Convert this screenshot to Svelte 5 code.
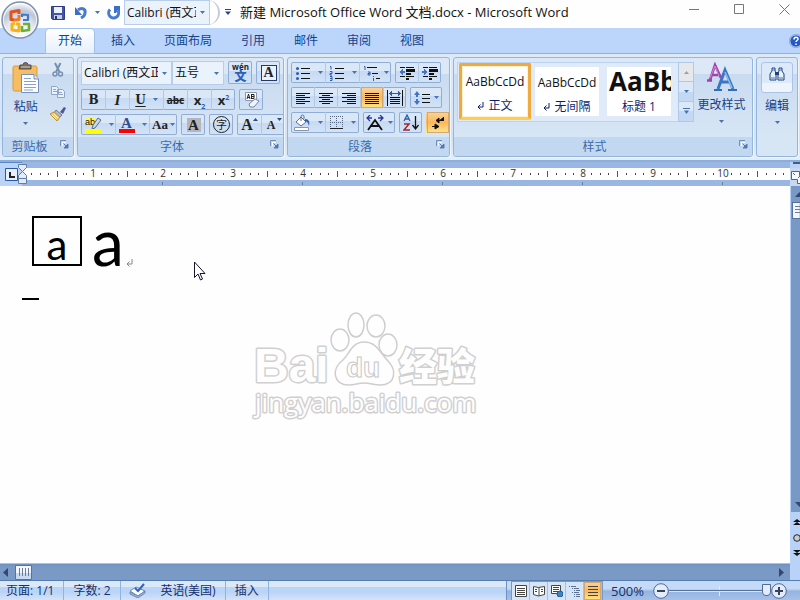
<script lang="ts">
  const UNIT = 70;

  const tabs = ['开始', '插入', '页面布局', '引用', '邮件', '审阅', '视图'];
  const styles = [
    { sample: 'AaBbCcDd', name: '正文', mark: true, heading: false },
    { sample: 'AaBbCcDd', name: '无间隔', mark: true, heading: false },
    { sample: 'AaBb', name: '标题 1', mark: false, heading: true },
  ];

  let activeTab = $state('开始');
  let activeStyle = $state('正文');
  let align = $state('两端对齐');
  let view = $state('普通视图');
  let zoom = $state(500);
  let scaleWidth = $state(0);

  const units = $derived(Array.from({ length: Math.ceil(scaleWidth / UNIT) }, (_, i) => i));
</script>

{#snippet caret()}
  <svg class="caret" width="5" height="3" viewBox="0 0 5 3"><path d="M0 0h5L2.5 3z" fill="#4874b2" /></svg>
{/snippet}

{#snippet lines(d: string)}
  <svg width="16" height="16" viewBox="0 0 16 16"><path {d} stroke="#111" fill="none" shape-rendering="crispEdges" /></svg>
{/snippet}

{#snippet groupLabel(text: string)}
  <footer class="group-label">
    <span>{text}</span>
    <button type="button" class="launcher" aria-label="{text}设置">
      <svg width="9" height="9" viewBox="0 0 9 9">
        <path d="M.5 6V.5H6" stroke="#6d90c0" fill="none" />
        <path d="M2.5 6V2.5H6" stroke="#fff" fill="none" />
        <path d="M3.5 3.5l3 3M8 4v4H4z" stroke="#577bb0" fill="#577bb0" />
      </svg>
    </button>
  </footer>
{/snippet}

{#snippet returnMark()}
  <svg width="7" height="8" viewBox="0 0 7 8"><path d="M6 0v5H1M3.5 2.5L1 5l2.5 2.5" stroke="currentColor" fill="none" /></svg>
{/snippet}

<div class="window">
  <header class="titlebar">
    <button type="button" class="office" aria-label="Office 按钮">
      <svg width="40" height="40" viewBox="0 0 40 40">
        <defs>
          <radialGradient id="orb" cx="50%" cy="85%" r="80%">
            <stop offset="0" stop-color="#fff" />
            <stop offset=".5" stop-color="#e3e7ef" />
            <stop offset=".75" stop-color="#bcc5d5" />
            <stop offset="1" stop-color="#f4f6fa" />
          </radialGradient>
        </defs>
        <circle cx="20" cy="20" r="18" fill="url(#orb)" stroke="#8191ab" stroke-width="1.5" />
        <circle cx="20" cy="20" r="16.5" fill="none" stroke="#fff" opacity=".8" />
        <g fill="none" stroke-width="3" stroke-linejoin="round">
          <path d="M19 14v-3.500l-8 1.500v7.500l3 .5" stroke="#e0531c" />
          <path d="M14 20l5-.5V15" stroke="#ee7a25" />
          <path d="M22 17v-2.500l6 .5v5h-5" stroke="#3f79cc" stroke-width="2.2" />
          <path d="M15 23.500l-3 .5v6l7 1v-7h-3" stroke="#f6b312" />
          <path d="M22 26v5l7-1v-6h-6" stroke="#6fae3a" stroke-width="2.6" />
        </g>
      </svg>
    </button>
    <div class="quick">
      <button type="button" aria-label="保存">
        <svg width="14" height="14" viewBox="0 0 14 14">
          <path d="M.5.5h13v13h-12l-1-1z" fill="#4256a8" stroke="#2e3c86" />
          <path d="M3 1h8v6H3z" fill="#eef2fb" />
          <path d="M3 9h8v4H3z" fill="#c6cfe6" />
          <path d="M4 10h2v3H4z" fill="#27346f" />
        </svg>
      </button>
      <button type="button" aria-label="撤消">
        <svg width="14" height="14" viewBox="0 0 14 14">
          <path d="M4 4c4-3 8-1 7 3 0 3-2 4-4 5" fill="none" stroke="#477bd0" stroke-width="3" />
          <path d="M1 1v8h7z" fill="#3b6ec6" />
        </svg>
      </button>
      <button type="button" class="drop" aria-label="撤消列表">{@render caret()}</button>
      <button type="button" aria-label="恢复">
        <svg width="14" height="14" viewBox="0 0 14 14">
          <path d="M3 3.5a5 5 0 1 0 8 1" fill="none" stroke="#477bd0" stroke-width="3" />
          <path d="M7 0h6v6l-2-2-2 3H7z" fill="#3b6ec6" />
        </svg>
      </button>
      <span class="combo quick-font">
        <select aria-label="字体"><option>Calibri (西文正文)</option></select>
        {@render caret()}
      </span>
    </div>
    <button type="button" class="customize" aria-label="自定义快速访问工具栏">
      <svg width="6" height="6" viewBox="0 0 6 6"><path d="M0 0h6v1H0zM0 2.5h6L3 6z" fill="#24478c" /></svg>
    </button>
    <h1 class="title">新建 Microsoft Office Word 文档.docx - Microsoft Word</h1>
    <div class="controls">
      <button type="button" aria-label="最小化"><svg width="11" height="11" viewBox="0 0 11 11"><path d="M0 5.5h10" /></svg></button>
      <button type="button" aria-label="最大化"><svg width="11" height="11" viewBox="0 0 11 11"><path d="M.5.5h9v9h-9z" /></svg></button>
      <button type="button" aria-label="关闭"><svg width="11" height="11" viewBox="0 0 11 11"><path d="M.5.5l10 10M10.5.5l-10 10" /></svg></button>
    </div>
  </header>

  <nav class="tabs">
    {#each tabs as tab}
      <button type="button" class="tab" class:active={activeTab === tab} onclick={() => (activeTab = tab)}>{tab}</button>
    {/each}
    <button type="button" class="help" aria-label="帮助">
      <svg width="14" height="14" viewBox="0 0 14 14">
        <circle cx="7" cy="7" r="6.3" fill="#2459c6" stroke="#fff" />
        <circle cx="7" cy="7" r="6.7" fill="none" stroke="#5d7fb8" stroke-width=".6" />
        <path d="M5 5.5c0-3 4-3 4-.5 0 1.5-2 1.5-2 3M7 9.5v1.5" stroke="#fff" stroke-width="1.5" fill="none" />
      </svg>
    </button>
  </nav>

  <section class="ribbon">
    <div class="group clipboard">
      <div class="body">
        <button type="button" class="big paste">
          <svg width="28" height="32" viewBox="0 0 28 32">
            <rect x="1" y="4" width="24" height="25" rx="1.5" fill="#f6bd62" stroke="#d89b3e" />
            <path d="M8 3h3a2.500 2.500 0 0 1 5 0h3v4H7z" fill="#7c6f63" stroke="#594e46" />
            <path d="M9 5h9" stroke="#d5cec6" />
            <path d="M9.5 12.5H22l4.500 4.500v13.500h-17z" fill="#fff" stroke="#7590bc" />
            <path d="M22 12.5V17h4.500" fill="#dae6f7" stroke="#7590bc" />
            <path d="M12 16.5h7M12 19.5h12M12 22.5h12M12 25.5h12M12 28h9" stroke="#86a2cd" />
          </svg>
          <span>粘贴</span>
          {@render caret()}
        </button>
        <div class="stack">
          <button type="button" aria-label="剪切">
            <svg width="14" height="16" viewBox="0 0 14 16" fill="none" stroke="#7890b0">
              <path d="M4 1l4.500 9M9.5 1L5 10" stroke-width="2" />
              <circle cx="4" cy="12" r="2" stroke-width="1.5" /><circle cx="9.5" cy="12" r="2" stroke-width="1.5" />
            </svg>
          </button>
          <button type="button" aria-label="复制">
            <svg width="16" height="14" viewBox="0 0 16 14" stroke="#8ba5cb" fill="#edf3fb">
              <path d="M1.5 1.5h5l2 2v6h-7zM7.5 4.5h5l2 2v6h-7z" />
              <path d="M3 4.5h3M3 6.5h4M9 7.5h3M9 9.5h4" />
            </svg>
          </button>
          <button type="button" aria-label="格式刷">
            <svg width="18" height="16" viewBox="0 0 18 16">
              <path d="M11 6l4-5 2 1-3 6z" fill="#53559b" />
              <path d="M7 4l6 5-2 2-6-4z" fill="#b5bac9" stroke="#71788d" />
              <path d="M1 8l4-2 6 5-3 4z" fill="#f4cf65" stroke="#bd913b" />
              <path d="M3 9l4 4M5 8l4 4" stroke="#fff3b5" />
            </svg>
          </button>
        </div>
      </div>
      {@render groupLabel('剪贴板')}
    </div>

    <div class="group font">
      <div class="body rows">
        <div class="row">
          <div class="pair">
            <span class="combo name">
              <select aria-label="字体名称"><option>Calibri (西文正文)</option></select>
              {@render caret()}
            </span>
            <span class="combo size">
              <select aria-label="字号"><option>五号</option><option>四号</option></select>
              {@render caret()}
            </span>
          </div>
          <div class="cells">
            <button type="button" aria-label="拼音指南" class="pinyin"><span>wén</span><b>文</b></button>
          </div>
          <div class="cells">
            <button type="button" aria-label="字符边框"><span class="boxed">A</span></button>
          </div>
        </div>
        <div class="row">
          <div class="cells">
            <button type="button" aria-label="加粗"><b class="serif">B</b></button>
            <button type="button" aria-label="倾斜"><i class="serif">I</i></button>
            <button type="button" class="wide" aria-label="下划线"><b class="serif under">U</b>{@render caret()}</button>
            <button type="button" aria-label="删除线"><s>abc</s></button>
            <button type="button" aria-label="下标"><span class="script">x<sub>2</sub></span></button>
            <button type="button" aria-label="上标"><span class="script">x<sup>2</sup></span></button>
          </div>
          <div class="cells">
            <button type="button" aria-label="清除格式">
              <svg width="16" height="16" viewBox="0 0 16 16">
                <path d="M1.5.5h11v8h-11z" fill="#fff" stroke="#8998b2" />
                <path d="M3 7l1.500-5L6 7M3.5 5.5h2M7.5 2v5M7.5 2.5H10v4H7.5M7.5 4.5H10" stroke="#222" fill="none" />
                <path d="M5 12l6-5 4 2-5 6H6z" fill="#f2f5fb" stroke="#7386a8" />
              </svg>
            </button>
          </div>
        </div>
        <div class="row">
          <div class="cells">
            <button type="button" class="wide" aria-label="突出显示">
              <svg width="18" height="16" viewBox="0 0 18 16">
                <path d="M1 0h10v8H1z" fill="#fff45a" />
                <text x="1" y="8" font-family="Liberation Sans" font-size="9" fill="#111">ab</text>
                <path d="M14 1l3 2-6 8-3 1 1-4z" fill="#cbd7ec" stroke="#556b92" />
                <path d="M1 12h16v4H1z" fill="#ffff00" />
              </svg>
              {@render caret()}
            </button>
            <button type="button" class="wide" aria-label="字体颜色"><span class="colored">A</span>{@render caret()}</button>
            <button type="button" class="mid" aria-label="更改大小写"><b class="case">Aa</b>{@render caret()}</button>
          </div>
          <div class="cells">
            <button type="button" aria-label="字符底纹"><b class="shaded">A</b></button>
          </div>
          <div class="cells">
            <button type="button" aria-label="带圈字符"><span class="circled">字</span></button>
          </div>
          <div class="cells">
            <button type="button" aria-label="增大字体">
              <b class="grow">A</b><svg class="tip" width="5" height="3" viewBox="0 0 5 3"><path d="M0 3h5L2.5 0z" fill="#274d91" /></svg>
            </button>
            <button type="button" aria-label="缩小字体">
              <b class="shrink">A</b><svg class="tip" width="5" height="3" viewBox="0 0 5 3"><path d="M0 0h5L2.5 3z" fill="#274d91" /></svg>
            </button>
          </div>
        </div>
      </div>
      {@render groupLabel('字体')}
    </div>

    <div class="group paragraph">
      <div class="body rows">
        <div class="row">
          <div class="cells">
            <button type="button" class="wide" aria-label="项目符号">
              <svg width="16" height="16" viewBox="0 0 16 16">
                <path d="M6 3.5h9M6 8.5h9M6 13.5h9" stroke="#111" shape-rendering="crispEdges" />
                <g fill="#315bad"><circle cx="2.5" cy="3.5" r="1.5" /><circle cx="2.5" cy="8.5" r="1.5" /><circle cx="2.5" cy="13.5" r="1.5" /></g>
              </svg>
              {@render caret()}
            </button>
            <button type="button" class="wide" aria-label="编号">
              <svg width="16" height="16" viewBox="0 0 16 16">
                <path d="M6 3.5h9M6 8.5h9M6 13.5h9" stroke="#111" shape-rendering="crispEdges" />
                <path d="M1 1.5h1v3M1 6.5h2v2H1v1.500h2M1 11.5h2v4H1M1 13.5h2" stroke="#315bad" fill="none" />
              </svg>
              {@render caret()}
            </button>
            <button type="button" class="mid" aria-label="多级列表">
              <svg width="17" height="16" viewBox="0 0 17 16">
                <path d="M4 2.5h10M9 8.5h6M13 13.5h4" stroke="#111" shape-rendering="crispEdges" />
                <path d="M1 1.5h1V5M5 7h2v3H5V8.5h2M10.5 11v1M10.5 13v3" stroke="#315bad" fill="none" />
              </svg>
              {@render caret()}
            </button>
          </div>
          <div class="cells">
            <button type="button" aria-label="减少缩进量">
              <svg width="16" height="16" viewBox="0 0 16 16" shape-rendering="crispEdges">
                <path d="M1 2h5v1H1zM7 2h8v1H7zM7 4h9v3H7zM7 8h5v2H7zM1 11h5v1H1zM7 11h8v1H7zM7 13h3v2H7z" fill="#111" />
                <path d="M0 7l4-3v2h2v2H4v2z" fill="#4473c4" />
              </svg>
            </button>
            <button type="button" aria-label="增加缩进量">
              <svg width="16" height="16" viewBox="0 0 16 16" shape-rendering="crispEdges">
                <path d="M1 2h5v1H1zM7 2h8v1H7zM7 4h9v3H7zM7 8h5v2H7zM1 11h5v1H1zM7 11h8v1H7zM7 13h3v2H7z" fill="#111" />
                <path d="M6 7L2 4v2H0v2h2v2z" fill="#4473c4" />
              </svg>
            </button>
          </div>
        </div>
        <div class="row">
          <div class="cells">
            {#each [
              ['左对齐', 'M1 3.5h14M1 5.5h9M1 7.5h14M1 9.5h9M1 11.5h14M1 13.5h9'],
              ['居中', 'M1 3.5h14M4 5.5h8M1 7.5h14M4 9.5h8M1 11.5h14M4 13.5h8'],
              ['右对齐', 'M1 3.5h14M6 5.5h9M1 7.5h14M6 9.5h9M1 11.5h14M6 13.5h9'],
              ['两端对齐', 'M1 3.5h14M1 5.5h14M1 7.5h14M1 9.5h14M1 11.5h14M1 13.5h14'],
            ] as [name, d]}
              <button type="button" class:on={align === name} aria-label={name} onclick={() => (align = name)}>
                {@render lines(d)}
              </button>
            {/each}
            <button type="button" aria-label="分散对齐">
              <svg width="16" height="16" viewBox="0 0 16 16" shape-rendering="crispEdges">
                <path d="M.5 0v16M15.5 0v16M3 7.5h10M3 9.5h10M3 11.5h10M3 13.5h10" stroke="#111" />
                <path d="M2 3.5h12M4.5 1v5M11.5 1v5M3.5 2v3M12.5 2v3" stroke="#315bad" />
              </svg>
            </button>
          </div>
          <div class="cells">
            <button type="button" class="mid" aria-label="行距">
              <svg width="16" height="16" viewBox="0 0 16 16">
                <path d="M8 4.5h8M8 8.5h8M8 12.5h8" stroke="#111" shape-rendering="crispEdges" />
                <path d="M0 5l3-4 3 4H4v2H2V5zM0 11l3 4 3-4H4V9H2v2z" fill="#4473c4" />
              </svg>
              {@render caret()}
            </button>
          </div>
        </div>
        <div class="row">
          <div class="cells">
            <button type="button" class="wide" aria-label="底纹">
              <svg width="17" height="17" viewBox="0 0 17 17">
                <path d="M2 8l5-5 5 5-5 4z" fill="#fff" stroke="#5a7296" />
                <path d="M7 7V2.5a1.500 1.500 0 0 1 3 0V5" fill="none" stroke="#5a7296" />
                <path d="M11 5c4 0 5 3 4 7-1-3-1-4-4-5z" fill="#315bad" />
                <path d="M.5 13.5h14v3H.5z" fill="#fff" stroke="#8a97aa" />
              </svg>
              {@render caret()}
            </button>
            <button type="button" class="wide" aria-label="边框">
              <svg width="15" height="15" viewBox="0 0 15 15" shape-rendering="crispEdges">
                <path d="M1 1.5h13M1 7.5h13M1.5 1v12M7.5 1v12M13.5 1v12" stroke="#52647f" stroke-dasharray="1 1" fill="none" />
                <path d="M1 13.5h13" stroke="#222" />
              </svg>
              {@render caret()}
            </button>
          </div>
          <div class="cells">
            <button type="button" class="mid" aria-label="中文版式">
              <svg width="18" height="16" viewBox="0 0 18 16">
                <path d="M2 15L9 5l7 10M5 11h8" stroke="#111" stroke-width="1.8" fill="none" />
                <path d="M1 3h5M12 3h5M4 0L1 3l3 3M14 0l3 3-3 3" stroke="#263a9a" stroke-width="1.3" fill="none" />
              </svg>
              {@render caret()}
            </button>
          </div>
          <div class="cells">
            <button type="button" class="sort" aria-label="排序">
              <svg width="16" height="17" viewBox="0 0 16 17" fill="none">
                <path d="M1 7l3-6 3 6M2 5h4" stroke="#315bad" stroke-width="1.3" />
                <path d="M1 10h5l-5 6h6" stroke="#a5242c" stroke-width="1.5" />
                <path d="M12.5 2v12M9.5 11l3 4 3-4" stroke="#111" stroke-width="1.3" />
              </svg>
            </button>
          </div>
          <div class="cells">
            <button type="button" class="on" aria-label="显示编辑标记">
              <svg width="14" height="14" viewBox="0 0 14 14">
                <path d="M12.5 1v3.500H8M8 2v5L5 4.500zM1 10.5h4M4 8v5l4-2.500z" stroke="#111" fill="#111" />
                <path d="M12.5 1v3.500H8" stroke="#111" fill="none" />
              </svg>
            </button>
          </div>
        </div>
      </div>
      {@render groupLabel('段落')}
    </div>

    <div class="group styles">
      <div class="body">
        <div class="gallery">
          {#each styles as s}
            <button type="button" class="style" class:chosen={activeStyle === s.name} onclick={() => (activeStyle = s.name)}>
              <span class="sample" class:heading={s.heading}>{s.sample}</span>
              <span class="style-name">{#if s.mark}{@render returnMark()}{/if}{s.name}</span>
            </button>
          {/each}
          <div class="gallery-scroll">
            <button type="button" class="off" aria-label="上一行"><svg width="5" height="3" viewBox="0 0 5 3"><path d="M0 3h5L2.5 0z" fill="#9a9fa8" /></svg></button>
            <button type="button" aria-label="下一行">{@render caret()}</button>
            <button type="button" aria-label="其他"><svg width="7" height="6" viewBox="0 0 7 6"><path d="M0 0h7v1H0zM1 2.5h5L3.5 6z" fill="#4874b2" /></svg></button>
          </div>
        </div>
        <button type="button" class="big change">
          <svg width="30" height="30" viewBox="0 0 30 30">
            <path d="M3 18L8 3l6 13M4 13h8M0 18.5h5" stroke="#9c45ac" stroke-width="2.6" fill="none" />
            <path d="M3 16L8 4l4 10" stroke="#dc86d4" fill="none" />
            <path d="M11 27l7-19 8 19M13 20h10" stroke="#3b76c2" stroke-width="3" fill="none" />
            <path d="M7 28h8M21 28h9" stroke="#326eb9" stroke-width="2" />
            <path d="M18 10l7 16" stroke="#8cbcec" stroke-width="1.5" />
          </svg>
          <span>更改样式</span>
          {@render caret()}
        </button>
      </div>
      {@render groupLabel('样式')}
    </div>

    <div class="group editing">
      <button type="button" class="big edit">
        <span class="edit-icon">
          <svg width="16" height="14" viewBox="0 0 16 14">
            <path d="M3 1h3v3l1 2v7H1V7l2-3zM10 1h3v3l2 3v6H9V6l1-2z" fill="#e9f0fa" stroke="#1e4178" />
            <path d="M6 5h4v3H6z" fill="#1e4178" />
            <path d="M2 11h4M10 11h4M3 3h3M10 3h3" stroke="#4671b1" />
          </svg>
        </span>
        <span>编辑</span>
        {@render caret()}
      </button>
    </div>
  </section>

  <div class="workspace">
    <div class="sheet">
      <div class="ruler">
        <button type="button" class="tabstop" aria-label="左对齐式制表符">
          <svg width="17" height="17" viewBox="0 0 17 17">
            <path d="M2.5 2.5h12v12h-12z" fill="#e7effb" stroke="#2c56a8" />
            <path d="M7 6v5h5" stroke="#222" stroke-width="2" fill="none" />
          </svg>
        </button>
        <div class="scale" bind:clientWidth={scaleWidth}>
          <svg class="indent" width="9" height="21" viewBox="0 0 9 21">
            <path d="M.5.5h8v3l-4 4-4-4zM.5 14.5v-3l4-4 4 4v3zM.5 14.5h8v5h-8z" fill="#e3ecf8" stroke="#5f7ba8" />
          </svg>
          <svg class="marks" width={scaleWidth} height="24">
            {#each units as u}
              {#each [1, 2, 3, 5, 6, 7] as n}
                <path d="M{Math.round(u * UNIT + (n * UNIT) / 8)}.5 11v2" stroke="#444" />
              {/each}
              <path d="M{u * UNIT + 35}.5 9v6" stroke="#555" />
              {#if u > 0}
                <text x={u * UNIT + 1} y="15" text-anchor="middle">{u}</text>
              {/if}
              {#if u > 0 && u % 2 === 0}
                <path d="M{u * UNIT}.5 20v3" stroke="#6b7f9f" />
              {/if}
            {/each}
          </svg>
        </div>
      </div>

      <main class="page">
        <p class="line"><span class="enclosed">a</span><span class="letter">a</span><span class="pilcrow">{@render returnMark()}</span></p>
        <div class="end-mark"></div>
        <svg class="watermark" width="240" height="116" viewBox="0 0 240 116">
          <g fill="#fefefe" stroke="#d0d0d0" stroke-width="3" paint-order="stroke" stroke-linejoin="round">
            <text x="4" y="74" font-size="48" font-weight="700" font-family="Liberation Sans">Bai</text>
            <text x="149" y="72" font-size="38" font-weight="900" font-family="Noto Sans CJK SC">经验</text>
            <text x="5" y="104" font-size="26" font-family="Open Sans">jingyan.baidu.com</text>
          </g>
          <g fill="#fefefe" stroke="#cecece" stroke-width="1.5">
            <ellipse cx="90" cy="32" rx="9" ry="11" />
            <ellipse cx="106" cy="17" rx="8" ry="12" />
            <ellipse cx="126" cy="18" rx="9" ry="11" />
            <ellipse cx="138" cy="37" rx="9" ry="11" />
            <path d="M114 34c-12 0-14 11-21 18-12 9-10 25 6 25 6 0 9-2 15-2s10 2 16 2c16 0 17-15 8-24-8-8-11-19-24-19z" />
          </g>
          <text x="96" y="69" font-size="28" font-weight="700" font-family="Liberation Sans" fill="#fefefe" stroke="#c8c8c8">du</text>
        </svg>
        <svg class="pointer" width="13" height="21" viewBox="0 0 13 21">
          <path d="M1.5 1v15.500l3.500-3.500 2.500 6 2-1-2.500-5.500h5z" fill="#fff" stroke="#15152f" />
        </svg>
      </main>

      <div class="hscroll">
        <button type="button" aria-label="向左滚动"><svg width="5" height="9" viewBox="0 0 5 9"><path d="M5 0v9L0 4.500z" fill="#34496c" /></svg></button>
        <button type="button" class="hthumb" aria-label="水平滑块"><svg width="10" height="8" viewBox="0 0 10 8"><path d="M.5 0v8M3.5 0v8M6.5 0v8M9.5 0v8" stroke="#6a7d9e" /></svg></button>
        <span class="space"></span>
        <button type="button" aria-label="向右滚动"><svg width="5" height="9" viewBox="0 0 5 9"><path d="M0 0v9l5-4.500z" fill="#34496c" /></svg></button>
      </div>
    </div>

    <div class="vscroll">
      <button type="button" class="split" aria-label="拆分窗口"></button>
      <button type="button" class="ruler-toggle" aria-label="标尺">
        <svg width="14" height="14" viewBox="0 0 14 14"><path d="M1.5 1.5h8v4h4v8h-6v-4h-6zM3 3l2 2M8 8l3-3" fill="#f5f8fd" stroke="#5b6473" /></svg>
      </button>
      <div class="track">
        <button type="button" class="arrow" aria-label="向上滚动"><svg width="9" height="5" viewBox="0 0 9 5"><path d="M0 5h9L4.5 0z" fill="#34496c" /></svg></button>
        <button type="button" class="vthumb" aria-label="垂直滑块"><svg width="8" height="9" viewBox="0 0 8 9"><path d="M0 .5h8M0 3.5h8M0 6.5h8" stroke="#6a7d9e" /></svg></button>
        <span class="space"></span>
        <button type="button" class="arrow" aria-label="向下滚动"><svg width="9" height="5" viewBox="0 0 9 5"><path d="M0 0h9L4.5 5z" fill="#34496c" /></svg></button>
      </div>
      <div class="browse">
        <button type="button" aria-label="前一页"><svg width="8" height="7" viewBox="0 0 8 7"><path d="M0 3h8L4 0zM0 6h8L4 3z" fill="#111" /></svg></button>
        <button type="button" aria-label="选择浏览对象"><svg width="8" height="8" viewBox="0 0 8 8"><circle cx="4" cy="4" r="3.3" fill="#c9ccd2" stroke="#222" /></svg></button>
        <button type="button" aria-label="下一页"><svg width="8" height="7" viewBox="0 0 8 7"><path d="M0 1h8L4 4zM0 4h8L4 7z" fill="#111" /></svg></button>
      </div>
    </div>
  </div>

  <footer class="status">
    <button type="button">页面: 1/1</button>
    <button type="button">字数: 2</button>
    <button type="button" class="lang">
      <svg width="17" height="15" viewBox="0 0 17 15">
        <path d="M1 8l6-4 9 4-7 5z" fill="#fff" stroke="#6c87b4" />
        <path d="M1 9v2l8 4 7-5V8l-7 5z" fill="#9eb8e0" stroke="#6c87b4" />
        <path d="M6 5l3 3 6-7" stroke="#2f62c0" stroke-width="2" fill="none" />
      </svg>
      英语(美国)
    </button>
    <button type="button">插入</button>
    <span class="space"></span>
    <div class="tray">
      <div class="views">
        {#each ['页面视图', '阅读版式', 'Web 版式', '大纲视图', '普通视图'] as name, i}
          <button type="button" class:on={view === name} aria-label={name} onclick={() => (view = name)}>
            <svg width="12" height="12" viewBox="0 0 12 12" fill="none" stroke="#444">
              {#if i === 0}
                <path d="M.5.5h11v11H.5z" fill="#fff" /><path d="M2 3.5h8M2 5.5h8M2 7.5h8M2 9.5h8" />
              {:else if i === 1}
                <path d="M.5 1.5l5 1 6-1v8l-6 1.500-5-1.500z" fill="#fff" /><path d="M6 2v9M2 4.5h2M2 6.5h2M8 4.5h2M8 6.5h2" />
              {:else if i === 2}
                <path d="M.5.5h9v8h-9z" fill="#fff" /><path d="M2 2.5h6M2 4.5h6M2 6.5h5" /><circle cx="9" cy="9" r="3" fill="#3b86c6" stroke="#1f5e93" />
              {:else if i === 3}
                <path d="M0 1.5h1M2 1.5h5M3 3.5h1M5 3.5h5M5 5.5h1M7 5.5h4M3 7.5h1M5 7.5h5M5 9.5h1M7 9.5h4M5 11.5h1M7 11.5h4" stroke="#5d7190" />
              {:else}
                <path d="M1 1.5h10M1 4.5h10M1 7.5h10M1 10.5h10" />
              {/if}
            </svg>
          </button>
        {/each}
      </div>
      <button type="button" class="percent">{zoom}%</button>
      <button type="button" class="round" aria-label="缩小" onclick={() => (zoom = Math.max(10, zoom - 10))}>
        <svg width="16" height="16" viewBox="0 0 16 16"><circle cx="8" cy="8" r="7.3" fill="#e3ecf8" stroke="#506a96" /><path d="M4 8h8" stroke="#35435c" stroke-width="2" /></svg>
      </button>
      <input type="range" min="10" max="500" bind:value={zoom} aria-label="显示比例" />
      <button type="button" class="round" aria-label="放大" onclick={() => (zoom = Math.min(500, zoom + 10))}>
        <svg width="16" height="16" viewBox="0 0 16 16"><circle cx="8" cy="8" r="7.3" fill="#e3ecf8" stroke="#506a96" /><path d="M4 8h8M8 4v8" stroke="#35435c" stroke-width="2" /></svg>
      </button>
    </div>
  </footer>
</div>

<style>
  :global(body) {
    margin: 0;
  }
  .window {
    display: flex;
    flex-direction: column;
    height: 100vh;
    overflow: hidden;
    position: relative;
    background: #fefefe;
    color: #111;
    font-family: 'Open Sans', 'Noto Sans CJK SC', sans-serif;
    font-size: 12px;
    line-height: 16px;
  }
  button,
  select {
    font: inherit;
    color: inherit;
    border: 0;
    padding: 0;
    background: none;
  }
  svg {
    display: block;
    flex: none;
  }
  .space {
    flex: 1;
  }

  .titlebar {
    display: flex;
    height: 28px;
    background: #fefefe;
  }
  .office {
    position: absolute;
    left: 0;
    top: 0;
    z-index: 2;
  }
  .quick {
    display: flex;
    align-items: center;
    gap: 9px;
    height: 25px;
    box-sizing: border-box;
    width: 182px;
    margin-left: 38px;
    padding-left: 13px;
    border: solid #c5cad4;
    border-width: 0 2px 0 0;
    border-radius: 0 16px 16px 0;
    background: #fefefe;
  }
  .quick .drop {
    margin: 0 -2px;
  }
  .combo {
    display: flex;
    align-items: center;
    position: relative;
    background: #eaf2fc;
    outline: 1px solid #b7cdea;
    outline-offset: -1px;
  }
  .combo select {
    appearance: none;
    width: 100%;
    height: 100%;
    padding: 0 14px 0 3px;
  }
  .combo .caret {
    position: absolute;
    right: 5px;
  }
  .quick-font {
    height: 25px;
    flex: 1;
    margin: 0 8px 0 -6px;
  }
  .customize {
    padding: 0 5px;
    margin: 0 0 4px;
  }
  .title {
    flex: 1;
    margin: 0 0 0 4px;
    font-size: 13px;
    font-weight: 400;
    line-height: 24px;
    white-space: nowrap;
  }
  .controls {
    display: flex;
    height: 19px;
    margin-right: -7px;
  }
  .controls button {
    width: 45px;
    display: grid;
    place-items: center;
  }
  .controls path {
    stroke: #777;
    fill: none;
  }

  .tabs {
    display: flex;
    gap: 5px;
    height: 26px;
    box-sizing: border-box;
    padding: 1px 0 0 46px;
    background: #bbd5fb;
    border-bottom: 1px solid #8db2e3;
    color: #15428b;
  }
  .tab {
    padding: 0 12px;
    line-height: 24px;
  }
  .tab.active {
    background: linear-gradient(#fff, #e6f0fb);
    border-radius: 4px 4px 0 0;
    box-shadow: 0 0 0 1px #a1c1ec;
  }
  .help {
    margin: 0 -3px 0 auto;
  }

  .ribbon {
    display: flex;
    gap: 3px;
    padding: 3px 2px;
    background: linear-gradient(#dce9f8, #d3e3f6 80%, #e4eefa);
    border-bottom: 2px solid #8baedb;
    color: #15428b;
  }
  .group {
    display: flex;
    flex-direction: column;
    height: 100px;
    box-sizing: border-box;
    border: 1px solid #94b5df;
    border-radius: 3px;
    background: linear-gradient(#dce8f6 0, #dce8f6 16px, #c9dbf0 16px, #d7e6f5 78px);
    box-shadow: 1px 1px 0 #eef5fd;
    overflow: hidden;
  }
  .clipboard {
    width: 72px;
  }
  .font {
    width: 207px;
    --cell: 24px;
    --mid: 28px;
  }
  .paragraph {
    width: 163px;
    --cell: 23px;
    --mid: 32px;
  }
  .styles {
    flex: 1;
    min-width: 0;
  }
  .editing {
    width: 42px;
  }
  .body {
    flex: 1;
    display: flex;
    padding: 4px 3px 0;
  }
  .rows {
    flex-direction: column;
    gap: 4px;
  }
  .font .rows {
    padding-top: 3px;
  }
  .row {
    display: flex;
    gap: 4px;
  }
  .group-label {
    display: flex;
    align-items: center;
    height: 19px;
    background: #c2d8f1;
    color: #3e6aaa;
  }
  .group-label span {
    flex: 1;
    text-align: center;
  }
  .launcher {
    padding: 0 4px 4px;
  }
  .pair {
    display: flex;
    width: 144px;
    height: 24px;
  }
  .combo.name {
    width: 91px;
    color: #111;
  }
  .combo.size {
    flex: 1;
    color: #111;
  }
  .cells {
    display: flex;
    height: 21px;
    border-radius: 2px;
    background: linear-gradient(#dae7f7 45%, #c7daf2 45%, #d3e4f8);
    box-shadow: inset 0 0 0 1px #8fadd6;
  }
  .cells button {
    display: flex;
    align-items: center;
    justify-content: center;
    gap: 4px;
    box-sizing: border-box;
    width: var(--cell);
    border: solid #b2c9e6;
    border-width: 0 0 0 1px;
    color: #222;
    position: relative;
  }
  .cells button:first-child {
    border-left-color: transparent;
  }
  .cells .wide {
    width: 34px;
    gap: 7px;
  }
  .cells .mid {
    width: var(--mid);
  }
  .cells .on,
  .views .on {
    background: linear-gradient(#f9d3a0, #fcb858 50%, #ffe68e);
    box-shadow: inset 0 0 0 1px #d0a970;
  }
  .font .row:first-child .cells {
    height: 23px;
  }
  .serif {
    font-family: 'DejaVu Serif', 'Liberation Serif', serif;
    font-size: 12px;
  }
  i.serif {
    font-family: 'Liberation Serif', serif;
    font-size: 15px;
    font-weight: 700;
  }
  .under {
    text-decoration: underline;
    text-underline-offset: 2px;
  }
  .cells s {
    font-size: 10px;
    font-weight: 700;
  }
  .script {
    font-weight: 700;
    font-size: 13px;
  }
  .script sub,
  .script sup {
    font-size: 7px;
    line-height: 0;
    color: #315bad;
  }
  .cells .pinyin {
    flex-direction: column;
    gap: 0;
    font-weight: 700;
  }
  .pinyin span {
    font-size: 8px;
    line-height: 9px;
  }
  .pinyin b {
    font-size: 12px;
    line-height: 12px;
    color: #2c5fc0;
  }
  .boxed {
    width: 14px;
    border: 1px solid #223a66;
    font: 700 14px/14px 'Liberation Serif', serif;
    text-align: center;
    background: #eaf1fa;
  }
  .colored {
    width: 16px;
    border-bottom: 4px solid #f00;
    font: 700 15px/12px 'Liberation Serif', serif;
    text-align: center;
    color: #2d4f8e;
  }
  .cells .mid:has(.case) {
    gap: 2px;
  }
  .case {
    font: 700 13px/16px 'Liberation Serif', serif;
  }
  .shaded {
    width: 14px;
    background: #b5b5bb;
    font: 700 15px/14px 'Liberation Serif', serif;
    text-align: center;
  }
  .circled {
    width: 15px;
    border: 1px solid #222;
    border-radius: 50%;
    font-size: 11px;
    line-height: 15px;
    text-align: center;
  }
  .grow {
    font: 700 16px/16px 'Liberation Serif', serif;
    margin-right: 5px;
  }
  .shrink {
    font: 700 12px/16px 'Liberation Serif', serif;
    margin-right: 5px;
  }
  .tip {
    position: absolute;
    top: 4px;
    right: 3px;
  }

  .big {
    display: flex;
    flex-direction: column;
    align-items: center;
    color: #15428b;
  }
  .paste {
    width: 42px;
    gap: 5px;
  }
  .paste span {
    margin-bottom: 2px;
  }
  .stack {
    display: flex;
    flex-direction: column;
    align-items: center;
    gap: 7px;
    width: 26px;
  }

  .gallery {
    display: flex;
    flex: 1;
    gap: 4px;
    height: 60px;
    box-sizing: border-box;
    padding: 0 1px;
    border: 1px solid #bcd3f0;
    background: #dfebf8;
  }
  .style {
    display: flex;
    flex-direction: column;
    box-sizing: border-box;
    width: 72px;
    height: 57px;
    border: 4px solid transparent;
    background: #fff padding-box;
    overflow: hidden;
    color: #0d1f6e;
  }
  .style + .style {
    margin-left: -4px;
  }
  .style.chosen {
    border: 3px solid #f0a93c;
    border-bottom-color: #fbd050;
    border-radius: 2px;
    box-shadow: inset 0 0 0 1px #fdf1cf;
  }
  .sample {
    height: 32px;
    line-height: 32px;
    width: 100%;
    color: #111;
    text-align: center;
  }
  .sample.heading {
    font-size: 26px;
    line-height: 28px;
    font-weight: 700;
    text-align: left;
    padding-left: 2px;
  }
  .style-name {
    display: flex;
    align-items: center;
    justify-content: center;
    gap: 4px;
    width: 100%;
  }
  .gallery-scroll {
    display: grid;
    grid-template-rows: repeat(3, 1fr);
    width: 14px;
    margin: 0 -1px 0 auto;
  }
  .gallery-scroll button {
    display: grid;
    place-items: center;
    background: linear-gradient(#dbe8f8 50%, #c2d8f3 50%);
    outline: 1px solid #b0c9ea;
  }
  .gallery-scroll .off {
    background: #e6e8ec;
  }
  .change {
    width: 58px;
    gap: 5px;
    white-space: nowrap;
  }
  .change span {
    margin-bottom: 2px;
  }
  .edit {
    gap: 5px;
    height: 78px;
    padding-top: 4px;
  }
  .edit span:nth-child(2) {
    margin-bottom: 2px;
  }
  .edit-icon {
    display: grid;
    justify-items: center;
    box-sizing: border-box;
    width: 32px;
    height: 31px;
    padding-top: 4px;
    border: 1px solid #a9c4e8;
    border-radius: 3px;
    background: linear-gradient(#dce9f8 70%, #edf4fc 70%);
  }

  .workspace {
    flex: 1;
    display: flex;
    min-height: 0;
  }
  .sheet {
    flex: 1;
    display: flex;
    flex-direction: column;
    min-width: 0;
  }
  .ruler {
    display: flex;
    height: 24px;
    background: #9ab7e3;
    overflow: hidden;
  }
  .tabstop {
    display: grid;
    place-items: center;
    box-sizing: border-box;
    width: 22px;
    background: #bad3f8;
    border: solid #5c85c5;
    border-width: 1px 0 0;
  }
  .scale {
    flex: 1;
    min-width: 0;
    position: relative;
    background: linear-gradient(transparent 6px, #fefefe 6px, #fefefe 18px, transparent 18px);
  }
  .marks {
    position: absolute;
    left: 0;
    top: 0;
    font-family: 'Open Sans', sans-serif;
    font-size: 10px;
    fill: #333;
  }
  .indent {
    position: absolute;
    left: -4px;
    top: 2px;
    z-index: 1;
  }
  .page {
    flex: 1;
    position: relative;
    padding: 30px 22px 0;
    background: #fefefe;
    font-family: Lato, sans-serif;
    color: #000;
    overflow: hidden;
  }
  .line {
    display: flex;
    align-items: flex-end;
    margin: 0 10px;
    height: 51px;
  }
  .enclosed {
    box-sizing: border-box;
    width: 50px;
    height: 50px;
    margin-bottom: 1px;
    border: 2px solid #000;
    text-align: center;
    font-size: 42px;
    line-height: 52px;
  }
  .letter {
    display: flex;
    align-items: center;
    height: 51px;
    margin-left: 10px;
    font-size: 64px;
    line-height: 68px;
  }
  .pilcrow {
    margin-left: 2px;
    color: #888;
  }
  .end-mark {
    width: 17px;
    height: 2px;
    margin-top: 31px;
    background: #000;
  }
  .watermark {
    position: absolute;
    left: 250px;
    top: 122px;
  }
  .pointer {
    position: absolute;
    left: 193px;
    top: 75px;
  }
  .hscroll {
    display: flex;
    align-items: center;
    height: 16px;
    padding: 0 6px 0 3px;
    background: linear-gradient(#6f91c2, #7a9ac5 20%, #7a9ac5);
    border-top: 1px solid #a9c3e6;
  }
  .hthumb {
    display: grid;
    place-items: center;
    width: 17px;
    height: 15px;
    margin-left: 7px;
    border: 1px solid #5672a0;
    border-radius: 1px;
    background: linear-gradient(#f3f7fc 50%, #c9d9ef 50%);
  }

  .vscroll {
    display: flex;
    flex-direction: column;
    width: 10px;
    overflow: hidden;
    background: #b9d3f8;
  }
  .vscroll button {
    width: 14px;
    display: grid;
    place-items: center;
  }
  .split {
    height: 6px;
    border: solid #475b7c;
    border-width: 2px 0 0;
    margin-left: 3px;
  }
  .ruler-toggle {
    height: 18px;
    background: #c7d8ef;
  }
  .track {
    flex: 1;
    display: flex;
    flex-direction: column;
    padding-left: 1px;
    background: #7898c5;
    margin-left: 1px;
  }
  .track .arrow {
    height: 16px;
  }
  .track .vthumb {
    height: 17px;
    border: 1px solid #5672a0;
    background: linear-gradient(90deg, #f3f7fc 50%, #c9d9ef 50%);
  }
  .browse {
    display: flex;
    flex-direction: column;
    justify-content: space-evenly;
    height: 68px;
    box-sizing: border-box;
    padding-bottom: 17px;
  }

  .status {
    display: flex;
    height: 20px;
    box-sizing: border-box;
    border-top: 1px solid #567db1;
    background: linear-gradient(#dbe8f8 30%, #bbd5f8 30%, #bad4f8 60%, #d5e4f6);
    color: #15306b;
  }
  .status > button {
    display: flex;
    align-items: center;
    padding: 0 9px;
    border: solid #90b3e2;
    border-width: 0 1px 0 0;
  }
  .status > button:first-child {
    padding-left: 6px;
  }
  .status > .lang {
    padding-left: 8px;
    gap: 15px;
  }
  .tray {
    display: flex;
    align-items: center;
    width: 294px;
    box-sizing: border-box;
    padding: 0 13px 0 5px;
    border-left: 1px solid #6e91c4;
    background: linear-gradient(#c5daf6 40%, #94b4df 55%, #a5c1e9);
  }
  .views {
    display: flex;
    height: 18px;
    outline: 1px solid #7698cb;
  }
  .views button {
    display: grid;
    place-items: center;
    width: 18px;
    border: solid #a6bfe2;
    border-width: 0 1px 0 0;
    background: #d5e4f7;
    box-sizing: border-box;
  }
  .percent {
    width: 51px;
    font-size: 13px;
    text-align: center;
  }
  .round {
    width: 16px;
  }
  input[type='range'] {
    flex: 1;
    min-width: 0;
    height: 16px;
    margin: 0;
    appearance: none;
    background: linear-gradient(90deg, transparent 49%, #dfeaf9 49%, #dfeaf9 50%, transparent 50%) 0 3px / 100% 10px no-repeat;
  }
  input[type='range']::-webkit-slider-runnable-track {
    height: 2px;
    background: linear-gradient(#54739f 50%, #d6e4f7 50%);
  }
  input[type='range']::-webkit-slider-thumb {
    appearance: none;
    width: 9px;
    height: 12px;
    margin-top: -6px;
    border: 1px solid #4e6c9c;
    border-radius: 1px 1px 5px 5px;
    background: #e4edf9;
  }
</style>
